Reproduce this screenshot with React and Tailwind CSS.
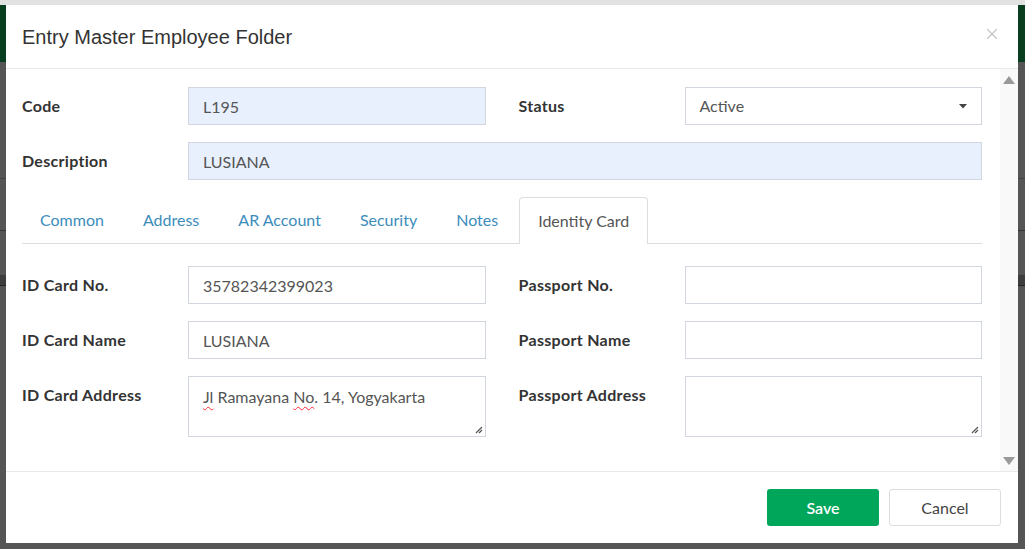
import { X } from 'lucide-react';

const Label = ({ children }) => (
  <div className="w-[166px] shrink-0 pt-[7px] text-[16px] font-bold tracking-[0.3px] text-[#333]">{children}</div>
);

const TextInput = ({ value = '', filled }) => (
  <input
    readOnly
    value={value}
    className={`h-[38px] w-full border border-[#d2d6de] px-[14px] text-[16px] text-[#555] outline-none ${
      filled ? 'bg-[#e8f0fe] text-[#222]' : 'bg-white'
    }`}
  />
);

const Grip = () => (
  <svg className="absolute bottom-[2px] right-[2px]" width="9" height="9" viewBox="0 0 9 9">
    <path d="M8 2 L2 8 M8 5 L5 8" stroke="#555" strokeWidth="1.2" />
  </svg>
);

const AreaBox = ({ children }) => (
  <div className="relative h-[61px] w-full border border-[#d2d6de] bg-white px-[14px] pt-[8px] text-[16px] text-[#555]">
    {children}
    <Grip />
  </div>
);

const Field = ({ label, children }) => (
  <div className="flex flex-1">
    <Label>{label}</Label>
    <div className="flex-1">{children}</div>
  </div>
);

const tabs = ['Common', 'Address', 'AR Account', 'Security', 'Notes', 'Identity Card'];

export default function App() {
  return (
    <div className="relative h-[549px] w-full overflow-hidden bg-[#555]" style={{ fontFamily: 'Lato, "Noto Sans", sans-serif' }}>
      {/* page behind the overlay */}
      <div className="flex h-full flex-col">
        <div className="h-[5px] bg-[#e2e2e2]" />
        <div className="h-[57px] bg-[#083d20]" />
        <div className="mt-[116px] h-px bg-[#444]" />
        <div className="mt-[51px] h-px bg-[#333]" />
        <div className="mt-[44px] h-[10px] bg-[#3d3d3d]" />
        <div className="h-px bg-[#222]" />
      </div>

      {/* modal */}
      <div className="absolute left-[6px] top-[5px] flex h-[538px] w-[1012px] flex-col bg-white">
        <div className="flex h-[64px] shrink-0 items-center justify-between border-b border-[#e9e9e9] pl-[16px] pr-[17px]">
          <h4 className="text-[20px] text-[#333]" style={{ fontFamily: '"Liberation Sans", Arial, sans-serif' }}>
            Entry Master Employee Folder
          </h4>
          <X size={18} strokeWidth={1.5} className="mb-[6px] text-[#c4c4c4]" />
        </div>

        <div className="flex min-h-0 flex-1">
          <div className="flex-1 pl-[16px] pr-[18px] pt-[18px]">
            <div className="flex gap-[33px]">
              <Field label="Code">
                <TextInput value="L195" filled />
              </Field>
              <Field label="Status">
                <div className="flex h-[38px] items-center justify-between border border-[#d2d6de] bg-white pl-[14px] pr-[14px] text-[16px] text-[#555]">
                  <span>Active</span>
                  <svg width="8" height="5" viewBox="0 0 8 5">
                    <path d="M0 0 H8 L4 4.5 Z" fill="#444" />
                  </svg>
                </div>
              </Field>
            </div>

            <div className="mt-[17px] flex">
              <Label>Description</Label>
              <div className="flex-1">
                <TextInput value="LUSIANA" filled />
              </div>
            </div>

            <div className="mt-[17px] flex h-[47px] border-b border-[#ddd]">
              {tabs.map((t) => {
                const active = t === 'Identity Card';
                return (
                  <div
                    key={t}
                    className={`mr-[3px] flex items-center px-[18px] text-[16px] ${
                      active
                        ? '-mb-px rounded-t-[4px] border border-b-0 border-[#ddd] bg-white text-[#555]'
                        : 'text-[#3c8dbc]'
                    }`}
                  >
                    {t}
                  </div>
                );
              })}
            </div>

            <div className="mt-[22px] flex gap-[33px]">
              <Field label="ID Card No.">
                <TextInput value="35782342399023" />
              </Field>
              <Field label="Passport No.">
                <TextInput />
              </Field>
            </div>
            <div className="mt-[17px] flex gap-[33px]">
              <Field label="ID Card Name">
                <TextInput value="LUSIANA" />
              </Field>
              <Field label="Passport Name">
                <TextInput />
              </Field>
            </div>
            <div className="mt-[17px] flex gap-[33px]">
              <Field label="ID Card Address">
                <AreaBox>
                  <span className="underline decoration-red-500 decoration-wavy decoration-1 underline-offset-[3px]">Jl</span> Ramayana{' '}
                  <span className="underline decoration-red-500 decoration-wavy decoration-1 underline-offset-[3px]">No</span>. 14, Yogyakarta
                </AreaBox>
              </Field>
              <Field label="Passport Address">
                <AreaBox />
              </Field>
            </div>
          </div>

          {/* scrollbar */}
          <div className="flex w-[18px] flex-col items-center justify-between bg-[#f9f9f9] pb-[6px] pt-[7px]">
            <svg width="12" height="8" viewBox="0 0 12 8">
              <path d="M6 0 L12 8 H0 Z" fill="#999" />
            </svg>
            <svg width="12" height="8" viewBox="0 0 12 8">
              <path d="M0 0 H12 L6 8 Z" fill="#999" />
            </svg>
          </div>
        </div>

        <div className="flex h-[72px] shrink-0 items-center justify-end gap-[10px] border-t border-[#e9e9e9] pr-[17px]">
          <button className="h-[37px] w-[112px] rounded-[3px] bg-[#00a65a] text-[16px] font-semibold text-white">Save</button>
          <button className="h-[37px] w-[112px] rounded-[3px] border border-[#ddd] bg-white text-[16px] text-[#444]">Cancel</button>
        </div>
      </div>
    </div>
  );
}
